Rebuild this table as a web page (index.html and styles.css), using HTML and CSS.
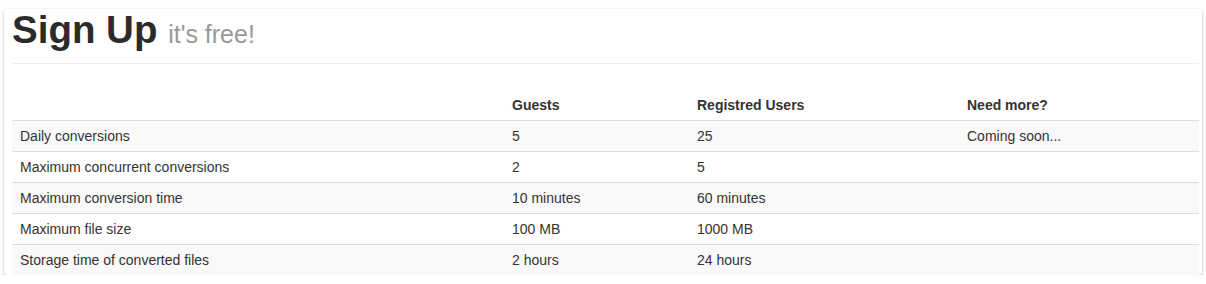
FILE: index.html
```html
<!DOCTYPE html>
<html>
<head>
<meta charset="utf-8">
<link rel="stylesheet" href="styles.css">
</head>
<body>
<div class="panel">
  <div class="page-header">
    <h1>Sign Up <small>it's free!</small></h1>
  </div>
  <table class="plans">
    <colgroup>
      <col class="c1"><col class="c2"><col class="c3"><col class="c4">
    </colgroup>
    <thead>
      <tr><th></th><th>Guests</th><th>Registred Users</th><th>Need more?</th></tr>
    </thead>
    <tbody>
      <tr><td>Daily conversions</td><td>5</td><td>25</td><td>Coming soon...</td></tr>
      <tr><td>Maximum concurrent conversions</td><td>2</td><td>5</td><td></td></tr>
      <tr><td>Maximum conversion time</td><td>10 minutes</td><td>60 minutes</td><td></td></tr>
      <tr><td>Maximum file size</td><td>100 MB</td><td>1000 MB</td><td></td></tr>
      <tr><td>Storage time of converted files</td><td>2 hours</td><td>24 hours</td><td></td></tr>
    </tbody>
  </table>
</div>
</body>
</html>
```
FILE: styles.css
```css
html, body {
  margin: 0;
  padding: 0;
  background: #fff;
}
body {
  font-family: "Liberation Sans", Arial, sans-serif;
  color: #333;
  font-size: 13px;
  line-height: 20px;
}
.panel {
  margin: 9px 0 0 4px;
  width: 1187px;
  padding: 0 3px 0 8px;
  background: #fff;
  border-radius: 3px;
  box-shadow: 0 1px 3px rgba(0, 0, 0, 0.3);
}
.page-header {
  border-bottom: 1px solid #eee;
  padding-bottom: 9px;
  margin-bottom: 26px;
}
.page-header h1 {
  margin: 0;
  padding-top: 1px;
  font-size: 38.5px;
  line-height: 40px;
  font-weight: bold;
  color: #2b2b2b;
}
.page-header small {
  font-size: 25px;
  font-weight: normal;
  color: #999;
}
.plans {
  width: 1187px;
  border-collapse: collapse;
  border-spacing: 0;
}
.c1 { width: 492px; }
.c2 { width: 185px; }
.c3 { width: 270px; }
.plans th, .plans td {
  padding: 5px 8px;
  text-align: left;
  vertical-align: top;
  line-height: 20px;
  font-size: 14px;
}
.plans th {
  font-weight: bold;
  color: #333;
}
.plans td {
  border-top: 1px solid #ddd;
}
.plans thead th {
  border-bottom: 1px solid #ddd;
}
.plans tbody tr:nth-child(odd) td {
  background: #f9f9f9;
}
```
